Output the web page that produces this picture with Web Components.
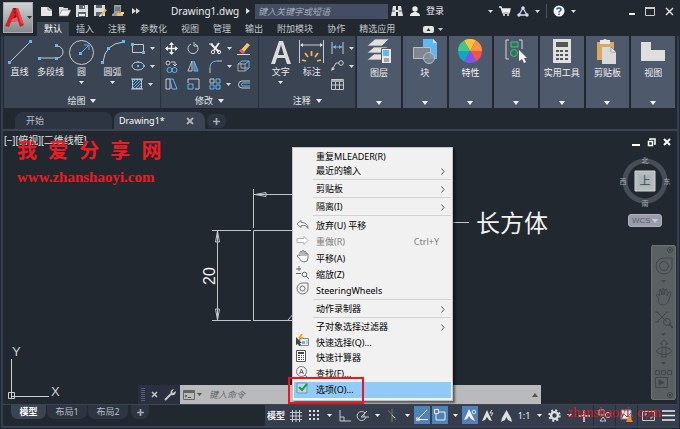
<!DOCTYPE html>
<html lang="zh-CN">
<head>
<meta charset="utf-8">
<title>Drawing1.dwg</title>
<style>
  html, body {
    margin: 0;
    height: 100%;
  }

  body {
    background: #212830;
    color: #d8dce2;
    font: 9px/12px 'Noto Sans', 'Noto Sans CJK SC', sans-serif;
    overflow: hidden;
  }
</style>
</head>
<body>
<cad-app></cad-app>

<script>
const BLUE = '#5eb8f2';

// name: [width, height, markup]
const ICONS = {
  down: [5, 3, '<path d="M0 0h5L2.500 3z" fill="currentColor" stroke="none"/>'],
  downbig: [6, 4, '<path d="M0 0h6L3 4z" fill="currentColor" stroke="none"/>'],
  logo: [22, 24, `<path d="M1 20 9 2h5l6 17-4 2-2-6-7 1-2 5z" fill="#d2232a" stroke="none"/>
    <path d="m9 2 3 5-3 6 4-1-3-6 2-4z" fill="#8e1015" stroke="none"/>
    <path d="m8 13 5-2 1 4-7 1z" fill="#f05a5e" stroke="none"/><path d="m14 2 6 17-3-2-5-15z" fill="#ee4a4f" stroke="none"/>`],
  newfile: [13, 11, '<path d="M1 1h7l4 3v6H1z" fill="#e6e6e6" stroke="none"/><path d="M8 1v3h4" stroke="#888"/>'],
  open: [13, 11, '<path d="M1 10V1h4l1 1h4v2" fill="#ddd" stroke="none"/><path d="M1 10 4 4h9l-3 6z" fill="#f2f2f2" stroke="#777" stroke-width=".6"/>'],
  save: [12, 12, '<path d="M0 0h12v12H0z" fill="#dcdcdc" stroke="none"/><path d="M3 0h6v4H3zM2 7h8v5H2z" fill="#5b6470" stroke="none"/><path d="M3 9h6v2H3zM7 1h1v2H7z" fill="#eee" stroke="none"/>'],
  saveas: [13, 12, '<path d="M0 0h11v11H0z" fill="#dcdcdc" stroke="none"/><path d="M2 0h6v3H2zM2 7h7v4H2z" fill="#5b6470" stroke="none"/><path d="m6 10 5-6 2 1-5 6z" fill="#f0b85a" stroke="none"/><path d="m5 12 1-3 2 2z" fill="#eee" stroke="none"/>'],
  plot: [12, 12, '<path d="M2 0h7v11H0V9l2-1z" fill="#9c9c9c" stroke="none"/><path d="M3 2h5v4H3z" fill="#777" stroke="none"/><path d="M5 8h6v3H5z" fill="#f0bc5c" stroke="none"/><path d="M9 7h3v2H9z" fill="#f7dca0" stroke="none"/>'],
  more: [8, 6, '<path d="m0 0 4 3-4 3zM4 0l4 3-4 3z" fill="#ddd" stroke="none"/>'],
  right: [4, 6, '<path d="m0 0 4 3-4 3z" fill="#ddd" stroke="none"/>'],
  binoc: [12, 10, '<path d="M2 0h3v4h2V0h3l2 10H7V6H5v4H0z" fill="#e2e2e2" stroke="none"/><path d="M1 5h3M8 5h3" stroke="#555"/>'],
  user: [10, 10, '<circle cx="5" cy="3" r="2.700" fill="#eee" stroke="none"/><path d="M0 10c0-3 2-3 4-4h2c2 1 4 1 4 4z" fill="#eee" stroke="none"/>'],
  cart: [12, 10, '<path d="M0 1h2l2 6h6l1-4H3" stroke="#eee" stroke-width="1.400"/><path d="M3 3h8l-1 3H4z" fill="#eee" stroke="none"/><circle cx="5" cy="9" r="1" fill="#eee" stroke="none"/><circle cx="9" cy="9" r="1" fill="#eee" stroke="none"/>'],
  autodesk: [12, 11, '<path d="M6 2 2 9h8z" stroke="#d3dcf0" stroke-width="1.300"/><circle cx="6" cy="2" r="1.800" fill="#cfdcf4" stroke="none"/><circle cx="2" cy="9" r="1.700" fill="#cfdcf4" stroke="none"/><circle cx="10" cy="9" r="1.700" fill="#cfdcf4" stroke="none"/>'],
  help: [12, 12, '<circle cx="6" cy="6" r="5.500" fill="#f4f4f4" stroke="none"/><path d="M4 4.500C4 2.500 8 2.500 8 4.500 8 6 6 6 6 7.500M6 8.500V10" stroke="#2858a8" stroke-width="1.500"/>'],
  min: [6, 10, '<path d="M0 8h6" stroke="#eee" stroke-width="2"/>'],
  max: [10, 9, '<path d="M.5.500h9v8h-9z" stroke="#ccc"/><path d="M0 1h10" stroke="#ccc" stroke-width="2"/>'],
  close: [9, 9, '<path d="m1 1 7 7M8 1 1 8" stroke="#eee" stroke-width="1.300"/>'],
  collapse: [11, 7, '<rect width="11" height="7" rx="2" fill="#e2e2e2" stroke="none"/><path d="m3.500 5 2-3 2 3z" fill="#333" stroke="none"/>'],

  line: [24, 24, `<path d="M2 22 22 2"/><path d="M0 21h3v3H0zM21 0h3v3h-3z" fill="${BLUE}" stroke="none"/>`],
  pline: [26, 24, `<path d="M2 18h17a6 6 0 0 0 0-12"/><path d="M0 17h3v3H0zM17 17h3v3h-3zM17 4h3v3h-3z" fill="${BLUE}" stroke="none"/>`],
  circle: [25, 25, `<circle cx="12.500" cy="12.500" r="12"/><path d="m12 13 7-7M15 5h5v5" stroke="${BLUE}"/><path d="M10 12h3v3h-3z" fill="${BLUE}" stroke="none"/>`],
  arc: [24, 24, `<path d="M2 22Q4 4 22 2"/><path d="M0 21h3v3H0zM6 7h3v3H6zM21 0h3v3h-3z" fill="${BLUE}" stroke="none"/>`],
  rect: [14, 12, `<path d="M1.500 2.500h11v8h-11z"/><path d="M0 1h3v3H0zM11 9h3v3h-3z" fill="${BLUE}" stroke="none"/>`],
  ellipse: [14, 12, `<ellipse cx="7" cy="6" rx="6" ry="4"/><path d="M6 5h2v2H6zM12 5h2v2h-2zM6 1h2v2H6z" fill="${BLUE}" stroke="none"/>`],
  hatch: [12, 12, `<path d="M1.500 1.500h9v9h-9z"/><path d="m1 5 4-4M1 8l7-7M1 11 11 1M4 11l7-7M7 11l4-4" stroke="${BLUE}"/><path d="M0 1h12M0 11h12"/>`],
  move: [13, 13, '<path d="M6.500 1v11M1 6.500h11" stroke="#eee" stroke-width="1.400"/><path d="M6.500 0 9 3H4zM6.500 13 9 10H4zM0 6.500 3 4v5zM13 6.500 10 4v5z" fill="#eee" stroke="none"/>'],
  rotate: [12, 13, '<path d="M8 2a5 5 0 1 1-4 0"/><path d="M7 0v4h4" />'],
  trim: [13, 13, '<path d="m2 2 8 8M10 1 5 8" stroke="#eee" stroke-width="2"/><circle cx="4" cy="10" r="1.700" stroke="#eee"/><circle cx="10" cy="10" r="1.700" stroke="#eee"/><path d="M0 2h4" stroke="#eee"/>'],
  copy: [13, 13, `<circle cx="3" cy="3" r="2"/><path d="M6 2h4v3M8 4l2 2 2-2" /><circle cx="4.500" cy="10" r="2.500" stroke="${BLUE}"/><circle cx="9.500" cy="10" r="2.500" stroke="${BLUE}"/>`],
  mirror: [12, 12, `<path d="M5 1v10H1z"/><path d="M7 1v10h4z" fill="#3c7fae" stroke="${BLUE}"/>`],
  fillet: [13, 13, `<path d="M1 13V8M8 1h5"/><path d="M1 8q0-7 7-7" stroke="${BLUE}"/>`],
  stretch: [13, 12, `<path d="M1 1h4v10H1z"/><path d="M5 1h3l4 10H7z" stroke="${BLUE}"/>`],
  scale: [13, 12, `<path d="M1 5V1h11v10H8"/><path d="M1 6h5v5H1z" stroke="${BLUE}"/>`],
  array: [12, 12, `<path d="M1 1h4v4H1z"/><path d="M7 1h4v4H7zM1 7h4v4H1zM7 7h4v4H7z" stroke="${BLUE}"/>`],
  erase: [13, 13, '<path d="m4 8 6-7 3 2-6 7z" fill="#f3c46b" stroke="none"/><path d="m2 9 2-2 4 3-2 2z" fill="#e9606d" stroke="none"/><path d="M0 12.500h13" stroke="#ddd"/>'],
  box: [13, 12, `<path d="M1 4h7v7H1z" stroke="#aaa"/><path d="m1 4 4-3h7v7l-4 3M8 4l4-3" stroke="${BLUE}"/><path d="M4 3v5h7" stroke="#aaa"/>`],
  offset: [13, 9, `<path d="M13 1H5a3.500 3.500 0 0 0 0 7h8"/><path d="M13 3H6a1.500 1.500 0 0 0 0 3h7" stroke="${BLUE}"/>`],
  text: [20, 23, '<path d="M0 23 8 0h4l8 23h-4l-2-6H6l-2 6zM7 14h6L10 4z" fill="#dcdcdc" stroke="none"/>'],
  dim: [25, 24, `<path d="M.5 0v23M24.500 0v23M2 5h21"/><path d="m1 5 3-2v4zM24 5l-3-2v4z" fill="#ddd" stroke="none"/><path d="M12.500 11v5M6 13l3 4M19 13l-3 4M3 20l4 1M22 20l-4 1" stroke="#f2b84c" stroke-width="1.800"/>`],
  linear: [13, 12, `<path d="M1 0v12M12 0v12"/><path d="M2 5h9" stroke="${BLUE}"/><path d="m2 5 3-2v4zM11 5 8 3v4z" fill="${BLUE}" stroke="none"/>`],
  leader: [13, 12, '<circle cx="10" cy="3" r="2.300"/><path d="M8 3H5L1 10"/><path d="m0 11 1-4 3 2z" fill="#ccc" stroke="none"/>'],
  table: [13, 11, '<path d="M.5.500h12v10H.5zM0 6h13M4.500 3v8M8.500 3v8"/><path d="M0 1h13v2H0z" fill="#aaa" stroke="none"/>'],
  layers: [25, 25, `<path d="M8 0h14l-7 7H0zM7 8h14l-7 6H0zM7 15h14l-7 6H0z" fill="#e0e0e0" stroke="#4e596c" stroke-width=".7"/><path d="M14.500 9.500h10v15h-10z" fill="#e8e8e8" stroke="#4e596c"/><path d="M16 11h6v6h-6z" fill="${BLUE}" stroke="none"/><path d="M17 20h5M17 22h5" stroke="#666"/>`],
  block: [26, 25, `<path d="M11 0h10l4 4v16H11z" fill="${BLUE}" stroke="none"/><path d="M21 0v4h4z" fill="#c7e5fa" stroke="none"/><path d="M1.500 8.500h17v11h-17z" fill="#7f8692" stroke="#b9bec6"/><circle cx="17" cy="19" r="5.500" fill="#858c98" fill-opacity=".8" stroke="#b9bec6"/>`],
  wheel: [24, 24, `<g stroke="none"><path d="M12 12 6 1.600A12 12 0 0 1 18 1.600z" fill="#ffc23c"/><path d="M12 12 18 1.600A12 12 0 0 1 24 12z" fill="#ff9340"/><path d="M12 12h12a12 12 0 0 1-6 10.400z" fill="#ee5253"/><path d="m12 12 6 10.400a12 12 0 0 1-12 0z" fill="#8350f0"/><path d="M12 12 6 22.400A12 12 0 0 1 0 12z" fill="#14a5c6"/><path d="M12 12H0A12 12 0 0 1 6 1.600z" fill="#41c98a"/></g>`],
  group: [22, 24, '<path d="M4 1H1v19h3M14 1h3v9" stroke="#d6d6d6"/><path d="M6 3h7v5H6z" fill="#2e7858" stroke="#42c183"/><circle cx="9" cy="14" r="3.500" fill="#2e7858" stroke="#42c183"/><path d="M14 11v11l3-2 2 4 2-1-2-4h3z" fill="#f4f4f4" stroke="none"/>'],
  calc: [18, 24, '<path d="M0 0h18v24H0z" fill="#e0e0e0" stroke="none"/><path d="M3 3h12v5H3z" fill="#555" stroke="none"/><path d="M3 11h3v2H3zM7 11h3v2H7zM12 11h3v2h-3zM3 15h3v2H3zM7 15h3v2H7zM12 15h3v2h-3zM3 19h3v2H3zM7 19h3v2H7zM12 19h3v2h-3z" fill="#555" stroke="none"/>'],
  paste: [20, 25, '<path d="M0 3h17v18H0z" fill="#dba765" stroke="none"/><path d="M3 1h3q2-2 4 0h3v4H3z" fill="#e8e8e8" stroke="none"/><path d="M5 8h9l5 5v12H5z" fill="#dadada" stroke="none"/><path d="M14 8v5h5z" fill="#fff" stroke="#666" stroke-width=".6"/>'],
  view: [24, 19, '<path d="M0 0h10v8h14v11H0z" fill="#dedede" stroke="none"/>'],
  tabx: [8, 8, '<path d="m1 1 6 6M7 1 1 7" stroke="#aeb4bd" stroke-width="1.800"/>'],
  plus: [7, 7, '<path d="M3.500 0v7M0 3.500h7" stroke="#a4abb5" stroke-width="1.700"/>'],
  dmin: [8, 10, '<path d="M0 8h8" stroke="#fff" stroke-width="2"/>'],
  drestore: [9, 9, '<path d="M3 2V1h5v5H7M1.500 3.500h4v4h-4z" stroke="#fff" stroke-width="1.500"/>'],
  dclose: [8, 8, '<path d="m1 1 6 6M7 1 1 7" stroke="#fff" stroke-width="2"/>'],

  undo: [13, 9, '<path d="M5 .5 1 4l4 3.500v-2q5-1 7 3 0-6-7-6z" stroke="#777" fill="#fff"/>'],
  redo: [13, 9, '<path d="m8 .5 4 4-4 4v-2H1v-4h7z" stroke="#b0b0b0" fill="#fff"/>'],
  hand: [13, 13, '<path d="M3 8 1 6q1-2 3 0V2q1-1 2 0V1q1-1 2 0v1q1-1 2 0v2q1-1 2 0v4q0 4-4 4-3 0-5-4zM6 2v4M8 2v4M10 3v3" stroke="#777" fill="#fff"/>'],
  zoom: [13, 13, '<path d="M0 3h5M3 0v5M0 7.500h5" stroke="#666"/><circle cx="8.500" cy="8.500" r="2.300" stroke="#666"/><path d="m10 10 3 3" stroke="#666"/>'],
  steering: [13, 13, '<path d="M12 1v5a5.500 5.500 0 1 1-5-5z" stroke="#777"/><circle cx="6.500" cy="6.500" r="2.500" stroke="#777"/>'],
  qselect: [13, 13, '<path d="M3.500 4.500h9v7h-9z" fill="#eee" stroke="#888"/><path d="M6 7h3v3H6z" fill="#6bb3e8" stroke="none"/><path d="M10 7h2M10 9h2" stroke="#6bb3e8"/><path d="M0 3v8l2-1 1 2 2-1-1-2h2z" fill="#444" stroke="none"/><path d="m5 0-3 4h3L4 7l4-4H5l2-3z" fill="#f5a623" stroke="none"/>'],
  qcalc: [10, 12, '<path d="M.5.500h9v11h-9z" stroke="#555" fill="#fff"/><path d="M2 2h6v2H2zM2 5h2v1H2zM5 5h1v1H5zM7 5h1v1H7zM2 7h2v1H2zM5 7h1v1H5zM7 7h1v1H7zM2 9h2v1H2zM5 9h1v1H5zM7 9h1v1H7z" fill="#444" stroke="none"/>'],
  find: [12, 12, '<circle cx="5.500" cy="5.500" r="5" stroke="#777"/><path d="m3.500 8 2-5 2 5M4 6.500h3M9 9l3 3" stroke="#666"/>'],
  option: [12, 12, '<path d="M1 1h10v10H1z" stroke="#7c93a6" fill="#b7d9f0"/><path d="m3 5 3 3 5-6" stroke="#14a048" stroke-width="2"/>'],
  chevron: [4, 7, '<path d="M.5.500 3 3.500.5 6.500" stroke="#555"/>'],

  navwheel: [18, 18, '<path d="M17 1v8a8 8 0 1 1-8-8z"/><circle cx="9" cy="9" r="4.500"/>'],
  navhand: [17, 19, '<path d="M4 12 1 8q1-2 4 1L4 3q1-2 2 0l1 5V2q1-2 2 0v6l1-5q1-2 2 0v6l2-4q2-1 2 1l-3 9q-2 4-6 3-3 0-4-5z"/>'],
  navzoom: [18, 18, '<path d="m2 2 10 10M12 2 2 12M0 2h4M10 2h4M0 12h4"/><circle cx="12" cy="12" r="3.500"/><path d="m14 14 4 4" stroke-width="2"/>'],
  navorbit: [16, 18, '<path d="M6 17V4H4l4-4 4 4h-2v13z"/><ellipse cx="8" cy="11" rx="7.500" ry="3.500"/>'],
  navshow: [17, 18, '<path d="M.5.500h4v4h-4zM6.500.500h4v4h-4zM12.500.500h4v4h-4zM.5 7.500h12v10H.5z"/><path d="m4 10 5 2.500L4 15z" fill="#3d4449"/>'],
  navx: [6, 6, '<circle cx="3" cy="3" r="2.500"/><path d="m2 2 2 2M4 2 2 4"/>'],

  grip: [4, 14, '<path d="M1 0v14M3 0v14" stroke="#888e98" stroke-dasharray="1 1"/>'],
  cmdx: [7, 7, '<path d="m1 1 5 5M6 1 1 6" stroke="#c4c7cc" stroke-width="1.500"/>'],
  wrench: [12, 12, '<path d="m1 11 6-6" stroke="#c4c7cc" stroke-width="2"/><path d="M7 6Q5 1 10 0L8 3l1 1 3-2q0 5-5 4z" fill="#c4c7cc" stroke="none"/>'],
  prompt: [12, 10, '<path d="M.5.500h11v9H.5z" stroke="#666"/><path d="M0 1h12v2H0z" fill="#666" stroke="none"/><path d="m2 5 2 1-2 1M5 7.500h3" stroke="#555"/>'],
  up: [6, 4, '<path d="M0 4h6L3 0z" fill="#555" stroke="none"/>'],

  grid: [12, 12, '<path d="M2.500 0v12M6 0v12M9.500 0v12M0 2.500h12M0 6h12M0 9.500h12"/>'],
  dots: [11, 11, '<path d="M0 1h2M4 1h2M8 1h2M0 5h2M4 5h2M8 5h2M0 9h2M4 9h2M8 9h2" stroke="#ddd" stroke-width="2"/>'],
  ortho: [13, 12, '<path d="M2 0v11h11M2 7h4v4"/>'],
  polar: [13, 12, '<path d="M9 3a4.500 4.500 0 1 0 1 4M5 7h8M5 7l6-6M8 4v3"/>'],
  iso: [10, 13, '<path d="m1 1 8 10" stroke="#b84f4b"/><path d="M5 0v13" stroke="#43a05c"/><path d="m5 6 3 3" />'],
  track: [12, 12, '<path d="M1 11 11 1M2 10.500h10M0 9h3v3H0z" stroke="#eee"/>'],
  osnap: [12, 12, '<path d="M3 3h8v8H2V4" stroke="#eee"/><path d="M.5.500h4v4h-4z" stroke="#eee" fill="#5182b4"/>'],
  annA: [13, 12, '<path d="M5 0 0 11l3-1 2-3 2 3 4 2-4-8z" fill="#f2f2f2" stroke="none"/><circle cx="10" cy="3" r="1.800" stroke="#dbe9f8"/>'],
  annB: [12, 12, '<path d="M5 0 0 11l3-1 2-3 2 3 3 1z" fill="#dedede" stroke="none"/><path d="m10 0-2 3h3L9 6" stroke="#ddd"/>'],
  annC: [11, 12, '<path d="M5.500 0 1 8l-1 4 4-2 1.500-3L7 10l4 2-1-4z" fill="#dedede" stroke="none"/>'],
  gear: [13, 13, '<circle cx="6.500" cy="6.500" r="5.200" stroke="#e0e0e0" stroke-width="2" stroke-dasharray="2 2.100"/><circle cx="6.500" cy="6.500" r="3.400" stroke="#e0e0e0" stroke-width="2.400"/>'],
  cross: [12, 12, '<path d="M6 0v12M0 6h12" stroke="#ddd" stroke-width="1.500"/>'],
  isolate: [13, 13, '<path d="M1 1h5v5H1z"/><circle cx="10" cy="6" r="2.500"/><path d="m5 8 3 4H2z"/>'],
  perf: [13, 13, '<path d="M1 1h10v9H1z" fill="#eee" stroke="#888"/><path d="m1 9 3-4 3 3 4-4" stroke="#4c79c4"/><path d="m9 6 4 7H6z" fill="#f08a24" stroke="none"/>'],
  full: [13, 10, '<path d="M.5.500h12v9H.5zM3 5V3h2M8 7h2V5"/>'],
  menu: [13, 11, '<path d="M0 1h13M0 5.500h13M0 10h13" stroke="#eee" stroke-width="1.500"/>']
};

const BASE = `
  * { box-sizing: border-box; }
  button, input {
    font: inherit;
    color: inherit;
    background: none;
    border: none;
    margin: 0;
    padding: 0;
  }
`;

class CadIcon extends HTMLElement {
  constructor() {
    super();
    this.attachShadow({ mode: 'open' });
  }

  connectedCallback() {
    const [w, h, body] = ICONS[this.getAttribute('name')];
    this.shadowRoot.innerHTML = `
      <style>
        :host { display: inline-flex; flex: none; }
        svg { display: block; fill: none; stroke: var(--icon-stroke, #c6cad0); }
      </style>
      <svg width="${w}" height="${h}" viewBox="0 0 ${w} ${h}" aria-hidden="true">${body}</svg>
    `;
  }
}
customElements.define('cad-icon', CadIcon);

const icon = name => `<cad-icon name="${name}"></cad-icon>`;

class TitleBar extends HTMLElement {
  constructor() {
    super();
    this.attachShadow({ mode: 'open' });
    this.shadowRoot.innerHTML = `
      <style>
        ${BASE}
        :host {
          display: grid;
          grid-template: 22px 14px / 34px 1fr;
          padding-left: 3px;
          background: #212830;
        }
        .app {
          grid-row: 1 / 3;
          width: 30px;
          height: 31px;
          margin-top: 2px;
          display: flex;
          align-items: center;
          gap: 1px;
          color: #333;
          background: linear-gradient(#d2d4d6, #84888d);
          border: 1px solid #a9adb2;
        }
        .row { display: flex; align-items: center; }
        .quick button { width: 18px; }
        .quick, .quick button, .win { display: flex; justify-content: center; }
        .title { width: 75px; margin-left: 26px; font-size: 10px; color: #eee; white-space: nowrap; }
        .search {
          flex: 1;
          max-width: 133px;
          height: 15px;
          margin: 0 3px 0 5px;
          padding: 0 3px;
          background: #444d61;
        }
        .search::placeholder { color: #a8aeb9; font-style: italic; opacity: 1; }
        .login { display: flex; align-items: center; gap: 6px; margin-left: 7px; color: #eee; }
        .tools { display: flex; align-items: center; gap: 6px; margin-left: auto; }
        .tools i { width: 1px; height: 14px; background: #4a5160; }
        .win { align-items: center; gap: 10px; margin: 0 6px 0 53px; }
        button { display: flex; align-items: center; }
        nav button { height: 14px; padding: 0 7px; color: #c3c8cf; }
        nav [aria-selected=true] { background: #3b4453; color: #fff; }
        .fold { margin-left: 14px; gap: 4px; }
      </style>
      <button class="app" aria-label="应用程序菜单">${icon('logo')}${icon('down')}</button>
      <div class="row">
        <div class="quick">
          ${['newfile', 'open', 'save', 'saveas', 'plot', 'more'].map(n => `<button aria-label="${n}">${icon(n)}</button>`).join('')}
        </div>
        <span class="title">Drawing1.dwg</span>
        ${icon('right')}
        <input class="search" placeholder="键入关键字或短语" aria-label="搜索">
        ${icon('binoc')}
        <button class="login">${icon('user')}登录</button>
        <div class="tools">${icon('down')}${icon('cart')}${icon('autodesk')}${icon('down')}<i></i>${icon('help')}${icon('down')}</div>
        <div class="win">
          <button aria-label="最小化">${icon('min')}</button>
          <button aria-label="最大化">${icon('max')}</button>
          <button aria-label="关闭">${icon('close')}</button>
        </div>
      </div>
      <nav class="row" role="tablist">
        ${['默认', '插入', '注释', '参数化', '视图', '管理', '输出', '附加模块', '协作', '精选应用']
          .map((t, i) => `<button role="tab" aria-selected="${i === 0}">${t}</button>`).join('')}
        <button class="fold" aria-label="折叠">${icon('collapse')}${icon('down')}</button>
      </nav>
    `;
  }
}
customElements.define('cad-title-bar', TitleBar);

class ToolButton extends HTMLElement {
  constructor() {
    super();
    this.attachShadow({ mode: 'open' });
    this.shadowRoot.innerHTML = `
      <style>
        ${BASE}
        :host { display: block; }
        button {
          display: grid;
          grid-template-rows: 26px 14px 6px;
          place-items: center;
          width: 100%;
          white-space: nowrap;
          color: #e6e8eb;
        }
      </style>
      <button></button>
    `;
  }

  connectedCallback() {
    const drop = this.hasAttribute('drop') ? icon('down') : '';
    this.shadowRoot.querySelector('button').innerHTML =
      `${icon(this.getAttribute('icon'))}<span>${this.getAttribute('label')}</span>${drop}`;
  }
}
customElements.define('tool-button', ToolButton);

class RibbonPanel extends HTMLElement {
  constructor() {
    super();
    this.attachShadow({ mode: 'open' });
    this.shadowRoot.innerHTML = `
      <style>
        ${BASE}
        :host {
          display: flex;
          flex-direction: column;
          background: #3b4453;
          border-right: 1px solid #2b323e;
        }
        .tools { flex: 1; display: flex; padding-top: 3px; }
        .title {
          height: 14px;
          display: flex;
          align-items: center;
          justify-content: center;
          gap: 5px;
          color: #e6e8eb;
        }
      </style>
      <div class="tools"><slot></slot></div>
      <button class="title"><slot name="title"></slot>${icon('downbig')}</button>
    `;
  }
}
customElements.define('ribbon-panel', RibbonPanel);

// Grid of small buttons, "name" or "name+" for one with a drop arrow
class ToolGrid extends HTMLElement {
  constructor() {
    super();
    this.attachShadow({ mode: 'open' });
  }

  connectedCallback() {
    const cells = this.getAttribute('items').split(' ').map(item => {
      const name = item.replace('+', '');
      const drop = item.endsWith('+') ? icon('down') : '';
      return `<button aria-label="${name}">${icon(name)}${drop}</button>`;
    });
    this.shadowRoot.innerHTML = `
      <style>
        ${BASE}
        :host {
          display: grid;
          grid-template-columns: var(--cols, 28px);
          grid-auto-rows: 18px;
          align-content: start;
        }
        button { display: flex; align-items: center; gap: 5px; }
      </style>
      ${cells.join('')}
    `;
  }
}
customElements.define('tool-grid', ToolGrid);

class CollapsedPanel extends HTMLElement {
  constructor() {
    super();
    this.attachShadow({ mode: 'open' });
  }

  connectedCallback() {
    this.shadowRoot.innerHTML = `
      <style>
        ${BASE}
        :host { display: block; background: #4e596c; }
        button {
          display: grid;
          grid-template-rows: 30px 14px 1fr;
          justify-items: center;
          align-items: center;
          width: 100%;
          height: 100%;
          color: #eef0f2;
          white-space: nowrap;
        }
        button > :last-child { align-self: end; margin-bottom: 3px; }
      </style>
      <button>${icon(this.getAttribute('icon'))}<span>${this.getAttribute('label')}</span>${icon('downbig')}</button>
    `;
  }
}
customElements.define('collapsed-panel', CollapsedPanel);

class CadRibbon extends HTMLElement {
  constructor() {
    super();
    this.attachShadow({ mode: 'open' });
    this.shadowRoot.innerHTML = `
      <style>
        :host {
          display: grid;
          grid-template-columns: 158fr 99fr 96fr 321fr;
          height: 72px;
          padding: 0 2px 0 1px;
        }
        tool-button { width: 31px; }
        .draw tool-grid { margin-left: 3px; }
        .modify tool-grid { --cols: 22px 22px 28px 16px; margin-left: 4px; }
        .note tool-grid { --cols: 24px; margin-left: 4px; }
        .note tool-button:first-of-type { margin-left: 6px; }
        .rest {
          display: grid;
          grid-template-columns: repeat(7, 1fr);
          gap: 2px;
          padding-left: 1px;
        }
      </style>
      <ribbon-panel class="draw">
        <span slot="title">绘图</span>
        <tool-button icon="line" label="直线"></tool-button>
        <tool-button icon="pline" label="多段线"></tool-button>
        <tool-button icon="circle" label="圆" drop></tool-button>
        <tool-button icon="arc" label="圆弧" drop></tool-button>
        <tool-grid items="rect+ ellipse+ hatch+"></tool-grid>
      </ribbon-panel>
      <ribbon-panel class="modify">
        <span slot="title">修改</span>
        <tool-grid items="move rotate trim+ erase copy mirror fillet+ box stretch scale array+ offset"></tool-grid>
      </ribbon-panel>
      <ribbon-panel class="note">
        <span slot="title">注释</span>
        <tool-button icon="text" label="文字" drop></tool-button>
        <tool-button icon="dim" label="标注"></tool-button>
        <tool-grid items="linear+ leader+ table"></tool-grid>
      </ribbon-panel>
      <div class="rest">
        <collapsed-panel icon="layers" label="图层"></collapsed-panel>
        <collapsed-panel icon="block" label="块"></collapsed-panel>
        <collapsed-panel icon="wheel" label="特性"></collapsed-panel>
        <collapsed-panel icon="group" label="组"></collapsed-panel>
        <collapsed-panel icon="calc" label="实用工具"></collapsed-panel>
        <collapsed-panel icon="paste" label="剪贴板"></collapsed-panel>
        <collapsed-panel icon="view" label="视图"></collapsed-panel>
      </div>
    `;
  }
}
customElements.define('cad-ribbon', CadRibbon);

class FileTabs extends HTMLElement {
  constructor() {
    super();
    this.attachShadow({ mode: 'open' });
    this.shadowRoot.innerHTML = `
      <style>
        ${BASE}
        :host {
          display: flex;
          align-items: end;
          gap: 2px;
          height: 21px;
          padding-left: 12px;
          border-bottom: 2px solid #3b4453;
        }
        button {
          display: flex;
          align-items: center;
          height: 17px;
          padding: 0 11px;
          border-radius: 8px 8px 0 0;
          background: #2d3542;
          color: #b9bec6;
        }
        .start { width: 97px; }
        .active { width: 91px; padding: 0 11px 0 5px; justify-content: space-between; background: #3b4453; color: #fff; }
        .add { height: 14px; padding: 0 6px; border-radius: 6px; margin-bottom: 1px; }
      </style>
      <button class="start">开始</button>
      <button class="active">Drawing1*${icon('tabx')}</button>
      <button class="add" aria-label="新图形">${icon('plus')}</button>
    `;
  }
}
customElements.define('file-tabs', FileTabs);

class MenuItem extends HTMLElement {
  constructor() {
    super();
    this.attachShadow({ mode: 'open' });
  }

  connectedCallback() {
    const name = this.getAttribute('icon');
    const keys = this.getAttribute('keys');
    this.shadowRoot.innerHTML = `
      <style>
        ${BASE}
        :host { display: block; height: ${name ? 16 : 14}px; }
        button {
          display: grid;
          grid-template-columns: 20px 1fr auto;
          align-items: center;
          width: 100%;
          height: 100%;
          padding: 0 6px 0 2px;
          text-align: left;
          white-space: nowrap;
        }
        :host([selected]) button { background: #91c9f7; }
        button:disabled { color: #7d7d7d; }
        .keys { margin-right: 6px; }
      </style>
      <button role="menuitem" ${this.hasAttribute('disabled') ? 'disabled' : ''}>
        <span>${name ? icon(name) : ''}</span>
        <span><slot></slot></span>
        ${keys ? `<span class="keys">${keys}</span>` : ''}
        ${this.hasAttribute('sub') ? icon('chevron') : ''}
      </button>
    `;
  }
}
customElements.define('menu-item', MenuItem);

class ContextMenu extends HTMLElement {
  constructor() {
    super();
    this.attachShadow({ mode: 'open' });
    this.shadowRoot.innerHTML = `
      <style>
        :host {
          display: block;
          box-sizing: border-box;
          width: 161px;
          padding: 2px 1px;
          border: 1px solid #c4c4c4;
          background: #f1f1f1;
          box-shadow: 2px 2px 2px rgba(0, 0, 0, .5);
          color: #000;
          font-size: 9px;
          line-height: 14px;
        }
        ::slotted(hr) {
          height: 1px;
          margin: 1px 0 2px 19px;
          border: none;
          background: #d2d2d2;
        }
      </style>
      <slot></slot>
    `;
  }

  connectedCallback() {
    this.setAttribute('role', 'menu');
  }
}
customElements.define('context-menu', ContextMenu);

class ViewCube extends HTMLElement {
  constructor() {
    super();
    this.attachShadow({ mode: 'open' });
    this.shadowRoot.innerHTML = `
      <style>
        ${BASE}
        :host { display: grid; justify-items: center; gap: 6px; color: #a5a9ae; }
        svg { display: block; }
        text { font-size: 7px; fill: #a9adb1; text-anchor: middle; }
        .top { font-size: 11px; fill: #444; }
        .wcs {
          display: flex;
          align-items: center;
          justify-content: space-between;
          width: 34px;
          height: 13px;
          padding: 0 3px;
          border-radius: 3px;
          background: #9a9bab;
          border: 1px solid #b0b0bf;
          color: #5c5e6c;
          font: 8px 'Liberation Sans', sans-serif;
        }
        .wcs cad-icon { color: #c9c9d6; }
      </style>
      <svg width="54" height="54" viewBox="0 0 54 54">
        <circle cx="27" cy="27" r="20" fill="none" stroke="#484e57" stroke-width="5"/>
        <path d="M17 17h20v20H17z" fill="#b6bbbd" stroke="#d2d4d4"/>
        <path d="M21 21h12v12H21z" fill="#a9b4b9"/>
        <text class="top" x="27" y="31">上</text>
        <text x="27" y="9">北</text><text x="27" y="52">南</text>
        <text x="5" y="30">西</text><text x="49" y="30">东</text>
      </svg>
      <button class="wcs">WCS${icon('downbig')}</button>
    `;
  }
}
customElements.define('view-cube', ViewCube);

class NavBar extends HTMLElement {
  constructor() {
    super();
    this.attachShadow({ mode: 'open' });
    this.shadowRoot.innerHTML = `
      <style>
        ${BASE}
        :host {
          --icon-stroke: #40474c;
          display: flex;
          flex-direction: column;
          align-items: center;
          justify-content: space-between;
          box-sizing: border-box;
          width: 25px;
          height: 155px;
          padding: 1px 0;
          border: 1px solid #6b7071;
          border-radius: 2px;
          background: #5b6162;
          color: #40474c;
        }
        .end { align-self: end; margin-right: 2px; }
      </style>
      <cad-icon class="end" name="navx"></cad-icon>
      ${['navwheel', 'down', 'navhand', 'navzoom', 'down', 'navorbit', 'down', 'navshow'].map(icon).join('')}
      <cad-icon class="end" name="navx"></cad-icon>
    `;
  }
}
customElements.define('nav-bar', NavBar);

class CommandLine extends HTMLElement {
  constructor() {
    super();
    this.attachShadow({ mode: 'open' });
    this.shadowRoot.innerHTML = `
      <style>
        ${BASE}
        :host { display: flex; height: 19px; }
        .handle {
          display: flex;
          align-items: center;
          justify-content: space-between;
          width: 42px;
          padding: 0 4px 0 3px;
          background: #2b3040;
        }
        .box {
          flex: 1;
          display: flex;
          align-items: center;
          gap: 2px;
          padding: 0 3px;
          background: #b9babb;
          color: #555;
        }
        input { flex: 1; min-width: 0; margin-left: 5px; }
        input::placeholder { color: #666; font-style: italic; opacity: 1; }
      </style>
      <div class="handle">${icon('grip')}${icon('cmdx')}${icon('wrench')}</div>
      <div class="box">
        ${icon('prompt')}${icon('down')}
        <input placeholder="键入命令" aria-label="命令">
        ${icon('up')}
      </div>
    `;
  }
}
customElements.define('command-line', CommandLine);

class DrawingView extends HTMLElement {
  constructor() {
    super();
    this.attachShadow({ mode: 'open' });
    this.shadowRoot.innerHTML = `
      <style>
        ${BASE}
        :host { display: block; position: relative; flex: 1; min-height: 0; }
        .plan, .ucs, .mark, .label, .win, view-cube, nav-bar, command-line, .menu, .ring { position: absolute; }
        .plan { left: 0; top: 0; }
        .plan text { fill: #f2f2f2; font-family: 'Noto Sans CJK SC', sans-serif; }
        .ucs { left: 3px; bottom: 0; }
        .ucs text { fill: #d0d0d0; font: 13px 'Liberation Sans', sans-serif; }
        .label {
          left: 1px;
          top: 3px;
          font: 10px/14px 'Liberation Sans', 'Noto Sans CJK SC', sans-serif;
          color: #e2e2e2;
          white-space: nowrap;
        }
        .mark { left: 14px; top: 8px; color: #ec1c24; white-space: pre; }
        .mark b, .mark i { display: block; }
        .mark b { font: bold 20px/24px 'Liberation Sans', 'Noto Sans CJK SC', sans-serif; }
        .mark i { font: bold 15px/24px 'Liberation Serif', serif; margin-top: 2px; }
        .win { display: flex; align-items: center; gap: 7px; right: 6px; top: 6px; }
        .win button { display: flex; }
        view-cube { right: 5px; top: 23px; }
        nav-bar { right: 1px; top: 114px; }
        command-line { left: 135px; right: 136px; bottom: 0; }
        .menu { left: 289px; top: 16px; }
        .ring { left: 285px; top: 246px; width: 76px; height: 27px; border: 2px solid #f0141e; }
      </style>
      <svg class="plan" width="560" height="200" viewBox="3 131 560 200" fill="none" stroke="#c2c5c8">
        <path d="M253.500 189v39M253 194.500h42M266 192.500v4l-11-2zM253.500 321V230.500H295M253 320.500h42M212 230.500h39M212 320.500h39M217.500 231v89M215.500 242h4l-2-11zM215.500 309h4l-2 11zM288 320l6-7M450 222.500h19"/>
        <text x="476" y="232" font-size="24" stroke="none">长方体</text>
        <text transform="translate(215 285) rotate(-90)" font-size="16" stroke="none" style="font-family: 'Liberation Sans', sans-serif">20</text>
      </svg>
      <svg class="ucs" width="60" height="66" viewBox="6 338 60 66" fill="none" stroke="#d0d0d0">
        <path d="M11.500 359v40M8.500 392.500h6v6h-6zM11 396.500h38"/>
        <text x="12" y="356" stroke="none">Y</text><text x="51" y="396" stroke="none">X</text>
      </svg>
      <span class="label">[−][俯视][二维线框]</span>
      <div class="mark"><b>我  爱  分  享  网</b><i>www.zhanshaoyi.com</i></div>
      <div class="win">
        <button aria-label="最小化">${icon('dmin')}</button>
        <button aria-label="还原">${icon('drestore')}</button>
        <button aria-label="关闭">${icon('dclose')}</button>
      </div>
      <view-cube></view-cube>
      <nav-bar></nav-bar>
      <command-line></command-line>
      <context-menu class="menu">
        <menu-item>重复MLEADER(R)</menu-item>
        <menu-item sub>最近的输入</menu-item>
        <hr>
        <menu-item sub>剪贴板</menu-item>
        <hr>
        <menu-item sub>隔离(I)</menu-item>
        <hr>
        <menu-item icon="undo">放弃(U) 平移</menu-item>
        <menu-item icon="redo" keys="Ctrl+Y" disabled>重做(R)</menu-item>
        <menu-item icon="hand">平移(A)</menu-item>
        <menu-item icon="zoom">缩放(Z)</menu-item>
        <menu-item icon="steering">SteeringWheels</menu-item>
        <hr>
        <menu-item sub>动作录制器</menu-item>
        <hr>
        <menu-item sub>子对象选择过滤器</menu-item>
        <menu-item icon="qselect">快速选择(Q)...</menu-item>
        <menu-item icon="qcalc">快速计算器</menu-item>
        <menu-item icon="find">查找(F)...</menu-item>
        <menu-item icon="option" selected>选项(O)...</menu-item>
      </context-menu>
      <div class="ring"></div>
    `;
  }
}
customElements.define('drawing-view', DrawingView);

class StatusBar extends HTMLElement {
  constructor() {
    super();
    this.attachShadow({ mode: 'open' });
    const cell = (name, cls = '') => `<button class="${cls}" aria-label="${name}">${icon(name)}</button>`;
    const drop = cell('down', 'drop');
    this.shadowRoot.innerHTML = `
      <style>
        ${BASE}
        :host {
          display: flex;
          justify-content: space-between;
          position: relative;
          height: 21px;
          border-top: 1px solid #3b4453;
          border-bottom: 1px solid #3b4453;
        }
        button { display: flex; align-items: center; justify-content: center; }
        .tabs { display: flex; gap: 1px; padding-left: 8px; }
        .tabs button {
          width: 40px;
          height: 14px;
          border-radius: 0 0 7px 7px;
          background: #2d3542;
          color: #b9bec6;
        }
        .tabs .active { background: #3b4453; color: #fff; font-weight: bold; width: 35px; }
        .tabs .add { width: 18px; margin-left: 2px; }
        .cells { display: flex; }
        .cells button { width: 18px; background: #363e4d; color: #eee; }
        .cells .model { width: 22px; font-weight: bold; }
        .cells .drop { width: 12px; }
        .cells .wide { width: 22px; border-left: 1px solid #262c36; }
        .cells .on { background: #4f82b6; border: solid #363e4d; border-width: 1px 1px 2px; }
        .mark {
          position: absolute;
          right: 16px;
          top: 1px;
          color: #d81820;
          font: 14px/14px 'Liberation Serif', serif;
          white-space: nowrap;
        }
      </style>
      <div class="tabs">
        <button class="active">模型</button>
        <button>布局1</button>
        <button>布局2</button>
        <button class="add" aria-label="新建布局">${icon('plus')}</button>
      </div>
      <div class="cells">
        <button class="model">模型</button>
        ${cell('grid')}${cell('dots')}${drop}${cell('ortho')}${cell('polar')}${drop}${cell('iso')}${drop}
        ${cell('track', 'on')}${cell('osnap', 'on')}${drop}${cell('annA', 'on')}${cell('annB')}${cell('annC')}
        <button>1:1</button>${drop}${cell('gear')}${drop}${cell('cross')}
        ${cell('isolate', 'wide')}${cell('perf', 'wide')}${cell('full', 'wide')}${cell('menu')}
      </div>
      <span class="mark">zhanshaoyi. com</span>
    `;
  }
}
customElements.define('status-bar', StatusBar);

class CadApp extends HTMLElement {
  constructor() {
    super();
    this.attachShadow({ mode: 'open' });
    this.shadowRoot.innerHTML = `
      <style>
        :host {
          display: flex;
          flex-direction: column;
          height: 100vh;
        }
        .frame {
          flex: 1;
          display: flex;
          flex-direction: column;
          min-height: 0;
          margin: 0 1px 1px;
          border: solid #343e52;
          border-width: 0 2px 1px;
        }
      </style>
      <cad-title-bar></cad-title-bar>
      <div class="frame">
        <cad-ribbon></cad-ribbon>
        <file-tabs></file-tabs>
        <drawing-view></drawing-view>
        <status-bar></status-bar>
      </div>
    `;
  }
}
customElements.define('cad-app', CadApp);
</script>
</body>
</html>
